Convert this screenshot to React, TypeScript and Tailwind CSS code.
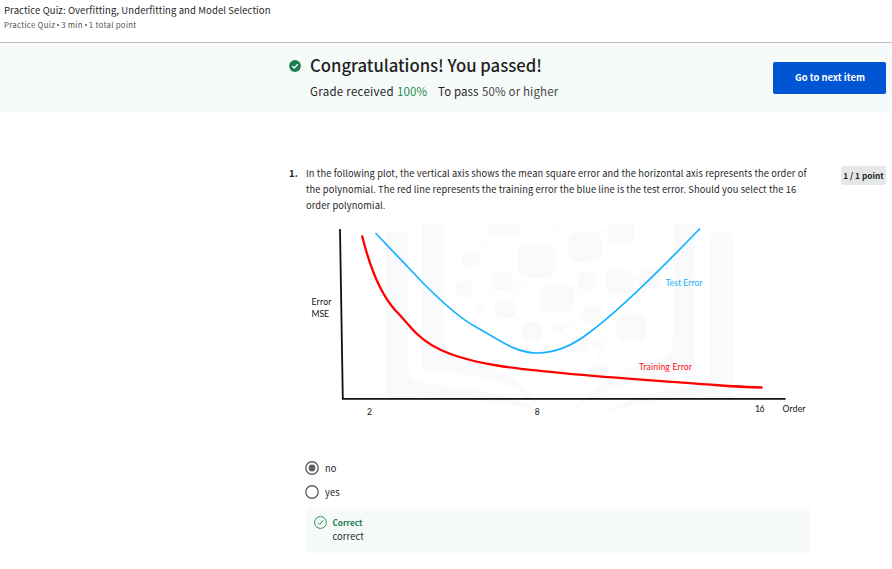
import React from "react";

const tiles = [
  { x: 489, y: 216, w: 32, h: 20, c: "#fcfbf9" },
  { x: 518, y: 244, w: 38, h: 34, c: "#fafafa" },
  { x: 568, y: 232, w: 34, h: 30, c: "#f9fafc" },
  { x: 608, y: 216, w: 26, h: 29, c: "#fcfafa" },
  { x: 462, y: 250, w: 18, h: 16, c: "#fbfbfb" },
  { x: 491, y: 272, w: 22, h: 18, c: "#fbfaf9" },
  { x: 455, y: 281, w: 18, h: 16, c: "#fcfaf8" },
  { x: 475, y: 303, w: 10, h: 11, c: "#fdfaf9" },
  { x: 495, y: 300, w: 20, h: 18, c: "#fafafa" },
  { x: 541, y: 284, w: 33, h: 29, c: "#fbfaf8" },
  { x: 577, y: 272, w: 19, h: 17, c: "#f9fafc" },
  { x: 606, y: 270, w: 27, h: 24, c: "#fafafa" },
  { x: 640, y: 269, w: 20, h: 19, c: "#fbf9fb" },
  { x: 522, y: 322, w: 20, h: 18, c: "#faf9fb" },
  { x: 553, y: 325, w: 12, h: 9, c: "#fcf9f9" },
  { x: 583, y: 305, w: 19, h: 18, c: "#fafaf9" },
  { x: 571, y: 336, w: 18, h: 16, c: "#fafafa" },
  { x: 617, y: 314, w: 30, h: 27, c: "#fafaf8" },
  { x: 593, y: 341, w: 10, h: 8, c: "#fcfaf9" },
  { x: 592, y: 364, w: 15, h: 12, c: "#fcfaf9" },
];

function Plot() {
  return (
    <svg
      viewBox="306 224 504 196"
      className="block h-[196px] w-[504px] overflow-hidden"
      fontFamily="Lato, sans-serif"
      fontSize="8.6"
      fill="#111"
    >
      <g fill="#f9fafb">
        <path d="M385 236q0-5 7-5h9q7 0 7 5v129q0 14 14 18c35 5 90 8 115 27-50-12-95-12-144-13q-8 0-8-8z" />
        <path d="M422 224h22v112q0 16 16 21c30 8 63 20 78 50-25-30-67-32-108-36q-8-1-8-9z" />
        <path d="M673 224h22v141q0 8-8 9c-45 5-82 10-112 36 18-28 50-43 82-50q16-5 16-20z" />
        <path d="M710 238q0-6 8-6h7q8 0 8 6v159c-45 0-85 2-130 17 25-18 60-24 93-29q14-4 14-17z" />
      </g>
      <g stroke="#fbfbfb" strokeWidth="1.5" fill="none">
        <path d="M492 234 471 257 464 289 480 309M471 259H537L588 247 621 234M471 258 502 281 557 298 620 282 650 277 621 234M502 281 480 309M537 261 505 309 532 331 559 330 592 314M537 261 557 298 505 309M537 261 586 281 588 247M586 281 592 314 632 328 580 345 559 330M580 345 598 345 600 370M537 261 560 224 621 234V282L632 328 650 277M632 328 598 345" />
      </g>
      {tiles.map((t, i) => (
        <rect key={i} x={t.x} y={t.y} width={t.w} height={t.h} rx={Math.min(t.w, t.h) * 0.28} fill={t.c} />
      ))}
      <path d="M340 229 342.8 398.8H785.5" fill="none" stroke="#111" strokeWidth="1.8" />
      <path
        d="M375.5 233 L424 284 C441 301 459 318 476 327 L490 335 C508 346 521 353 537 353 C557 353 575 344 590 332 C620 310 661 269 700 228.5"
        fill="none"
        stroke="#16b2ff"
        strokeWidth="1.7"
      />
      <path
        d="M362 235.5 C370 268 380 293 395 310 C403 318 409 326 416 333 C434 351 462 360 500 366 C560 375 650 380 715 385 Q741 387 762.5 387.5"
        fill="none"
        stroke="#fe0000"
        strokeWidth="2.3"
      />
      <text x="311.5" y="305" textLength="20">Error</text>
      <text x="311.5" y="316.5" textLength="17.5">MSE</text>
      <text x="366.9" y="414.5">2</text>
      <text x="534.7" y="414.5">8</text>
      <text x="755" y="412" textLength="9.5">16</text>
      <text x="782.5" y="412" textLength="23">Order</text>
      <text x="665.5" y="285.6" textLength="37" fill="#16b2ff">Test Error</text>
      <text x="639" y="369.5" textLength="53" fill="#fe0f0f">Training Error</text>
    </svg>
  );
}

function Radio({ label, checked }: { label: string; checked?: boolean }) {
  return (
    <label className="flex h-6 items-center">
      <svg viewBox="0 0 14 14" className="-ml-px size-[14px] shrink-0">
        <circle cx="7" cy="7" r="6.2" fill="white" stroke="#636363" strokeWidth="1.4" />
        {checked && <circle cx="7" cy="7" r="3.4" fill="#636363" />}
      </svg>
      <span className="ml-[6px] text-[9.3px] leading-4 tracking-[0.15px]">{label}</span>
    </label>
  );
}

function Dot() {
  return <span className="mx-[2px] inline-block size-[2px] rounded-full bg-[#555] align-[2px]" />;
}

export default function App() {
  return (
    <div className="h-[569px] w-[892px] overflow-hidden bg-white font-['Noto_Sans_CJK_SC',sans-serif] text-[#1f1f1f]">
      <header className="h-[43px] border-b border-[#bdbdbd] pl-1 pt-[3px]">
        <h1 className="w-max text-[9.5px] leading-[15px] tracking-[0.1px]">Practice Quiz: Overfitting, Underfitting and Model Selection</h1>
        <p className="w-max text-[7.9px] leading-[14px] tracking-[0.25px] text-[#555]">Practice Quiz<Dot />3 min<Dot />1 total point</p>
      </header>
      <section className="flex h-[69px] justify-between bg-[#f6fbf9] pl-[289px] pr-[6px]">
        <div className="flex">
          <svg viewBox="0 0 12 12" className="mt-[17px] size-3">
            <circle cx="6" cy="6" r="5.9" fill="#1d7c50" />
            <path d="m3.2 6 2 2 3.6-3.8" fill="none" stroke="white" strokeWidth="1.3" />
          </svg>
          <div className="ml-[9px] pt-[9px]">
            <h2 className="w-max text-[16.7px] font-medium leading-[26px]">Congratulations! You passed!</h2>
            <p className="mt-[4px] flex text-[11.5px] leading-[18px]">
              <span className="w-[87px] whitespace-nowrap tracking-[0.28px]">Grade received</span>
              <span className="w-[41px] tracking-[0.15px] text-[#1d8a55]">100%</span>
              <span className="w-[44px] whitespace-nowrap tracking-[0.1px]">To pass</span>
              <span className="whitespace-nowrap tracking-[0.15px] text-[#444]">50% or higher</span>
            </p>
          </div>
        </div>
        <button className="mt-[19px] h-8 w-[113px] rounded-[2px] bg-[#0056d2] pb-[2px] pl-px text-[9.4px] font-bold text-white">Go to next item</button>
      </section>
      <main className="flex pl-[289px] pr-[6px] pt-[53px]">
        <div className="w-[17px] shrink-0 text-[9.6px] font-bold leading-4">1.</div>
        <div className="w-[504px] shrink-0">
          <div className="whitespace-nowrap text-[9.3px] leading-4 tracking-[0.11px]">
            <p className="w-max">In the following plot, the vertical axis shows the mean square error and the horizontal axis represents the order of</p>
            <p className="w-max">the polynomial. The red line represents the training error the blue line is the test error. Should you select the 16</p>
            <p className="w-max">order polynomial.</p>
          </div>
          <div className="mt-[11px]"><Plot /></div>
          <div className="mt-9">
            <Radio label="no" checked />
            <Radio label="yes" />
          </div>
          <div className="mt-1 flex h-[45px] bg-[#f6fbf9] pl-2 pt-2">
            <svg viewBox="0 0 13 13" className="size-[13px]" fill="none" stroke="#2c8e60">
              <circle cx="6.5" cy="6.5" r="5.9" strokeWidth="1" />
              <path d="m3.9 6.6 1.8 1.8 3.3-3.8" strokeWidth="1" />
            </svg>
            <div className="ml-[5.5px] -mt-px">
              <p className="text-[8.2px] font-bold leading-[14px] text-[#1d7c50]">Correct</p>
              <p className="text-[9.3px] leading-[15px] tracking-[0.1px]">correct</p>
            </div>
          </div>
        </div>
        <div className="ml-auto mt-px h-[19px] w-[45px] rounded-[2px] bg-[#e5e7e8] text-center text-[8.3px] font-bold leading-[19px] whitespace-nowrap">1 / 1 point</div>
      </main>
    </div>
  );
}
